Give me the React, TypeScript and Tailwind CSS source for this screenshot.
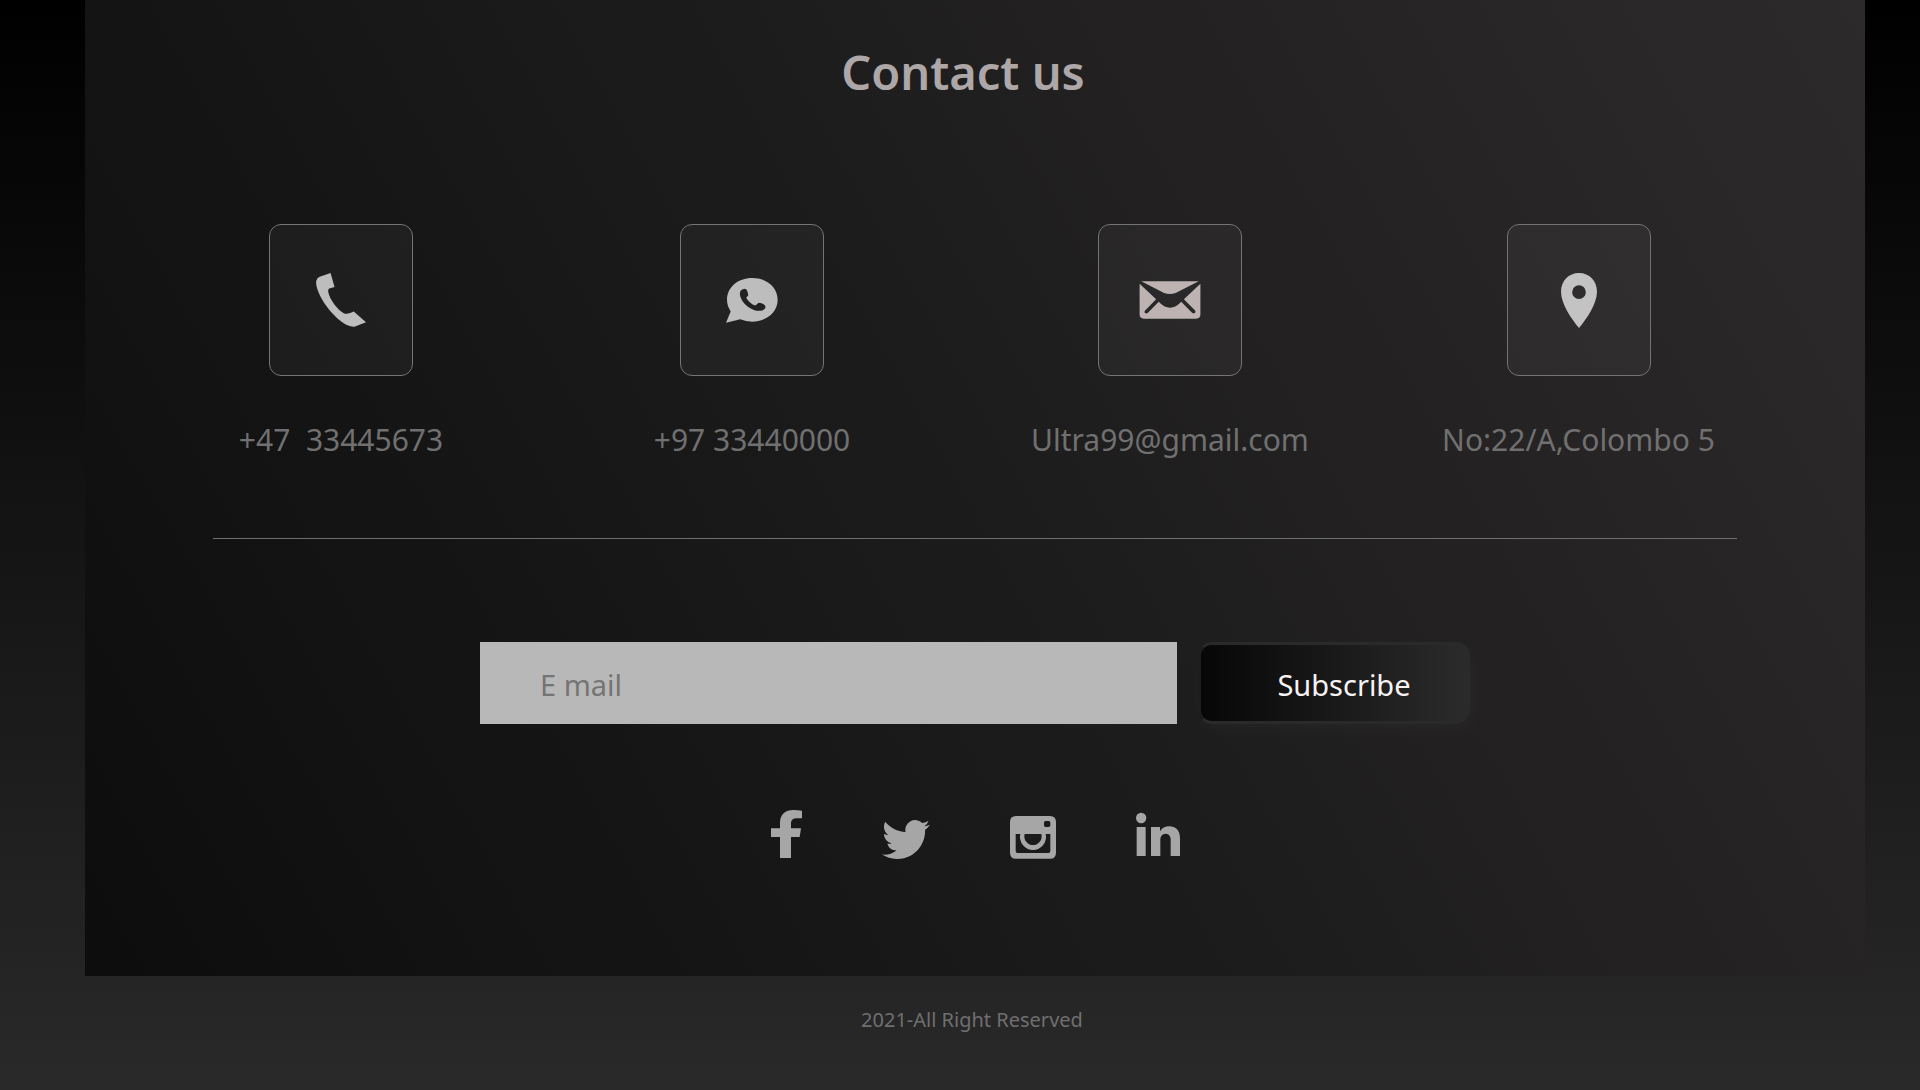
import type { ReactNode } from "react";

const PhoneIcon = () => (
  <svg viewBox="285 219 151 163" className="h-[54px] w-[50px]" fill="#bdbdbd" aria-hidden="true">
    <path d="M329 219L341 261L325 266Q321 268 322 276C326 298 350 330 370 341Q374 342 378 342Q388 341 399 335L436 368L401 381Q392 382 378 376C343 358 300 305 288 264Q284 250 286 242Q288 233 296 230Z" />
  </svg>
);

const WhatsappIcon = () => (
  <svg viewBox="264 231 157 136" className="h-[45px] w-[52px]" aria-hidden="true">
    <path
      fill="#bdbdbd"
      fillRule="evenodd"
      d="M343 231C386 231 420 259 420 297C420 335 386 363 343 363Q324 363 307 356L264 366L278 332Q267 315 267 297C267 259 300 231 343 231ZM318 264C309 264 305 272 306 281C308 300 328 322 352 329Q362 331 373 329C382 327 385 321 382 314Q375 307 363 306C359 307 358 312 352 314C343 313 329 299 325 291C327 286 332 285 331 281Q329 269 325 265Q322 263 318 264Z"
    />
  </svg>
);

const MailIcon = () => (
  <svg viewBox="330 242 186 115" className="h-[38px] w-[62px]" fill="#beb3b3" aria-hidden="true">
    <path d="M336 243H510L440 278Q423 285 405 278Z" />
    <path d="M331 250L381 297L347 332Q343 339 351 340Q354 340 357 337L389 305Q405 323 423 323Q441 323 457 305L489 337Q493 341 498 339Q502 336 499 331L465 297L515 250V343Q515 356 502 356H344Q331 356 331 343Z" />
  </svg>
);

const PinIcon = () => (
  <svg viewBox="414 225 108 165" className="h-[55px] w-9" fill="#c3c3c3" aria-hidden="true">
    <path
      fillRule="evenodd"
      d="M468 225C499 225 522 249 522 281C522 318 490 363 468 390C446 363 414 318 414 281C414 249 437 225 468 225ZM468 262A20.500 20.500 0 1 0 468 303A20.500 20.500 0 1 0 468 262Z"
    />
  </svg>
);

const FacebookIcon = () => (
  <svg viewBox="93 60 93 147" className="h-[49px] w-[31px]" fill="#a6a6a6" aria-hidden="true">
    <path d="M120 204V141H93V115H120V99C120 72 136 60 160 60Q175 60 186 62V85H170Q153 85 153 99V115H183L179 141H153V204Z" />
  </svg>
);

const TwitterIcon = () => (
  <svg viewBox="71 7.500 24 24.500" className="h-[49px] w-12" fill="#a6a6a6" aria-hidden="true">
    <path
      transform="translate(71 10.250)"
      d="M23.953 4.57a10 10 0 01-2.825.775 4.958 4.958 0 002.163-2.723c-.951.555-2.005.959-3.127 1.184a4.92 4.92 0 00-8.384 4.482C7.69 8.095 4.067 6.13 1.64 3.162a4.822 4.822 0 00-.666 2.475c0 1.71.87 3.213 2.188 4.096a4.904 4.904 0 01-2.228-.616v.06a4.923 4.923 0 003.946 4.827 4.996 4.996 0 01-2.212.085 4.936 4.936 0 004.604 3.417 9.867 9.867 0 01-6.102 2.105c-.39 0-.779-.023-1.17-.067a13.995 13.995 0 007.557 2.209c9.053 0 13.998-7.496 13.998-13.985 0-.21 0-.42-.015-.63A9.935 9.935 0 0024 4.59z"
    />
  </svg>
);

const InstagramIcon = () => (
  <svg viewBox="810 60 138 147" className="h-[49px] w-[46px]" fill="#a6a6a6" aria-hidden="true">
    <path
      fillRule="evenodd"
      d="M828 78H930Q948 78 948 96V188Q948 206 930 206H828Q810 206 810 188V96Q810 78 828 78ZM917 93Q912 93 912 98V106Q912 111 917 111H926Q931 111 931 106V98Q931 93 926 93ZM827 132V183Q827 189 833 189H925Q931 189 931 183V132H917A39 39 0 1 1 841 132ZM854 132H904A26 26 0 1 1 854 132Z"
    />
  </svg>
);

const LinkedinIcon = () => (
  <svg viewBox="1188 60 132 147" className="h-[49px] w-11" fill="#a6a6a6" aria-hidden="true">
    <circle cx="1203.500" cy="84" r="15.500" />
    <path d="M1190 111H1217V198H1190ZM1233 111H1260V124Q1269 109 1287 109C1311 109 1320 124 1320 146V198H1292V151Q1292 131 1277 131Q1261 131 1261 151V198H1233Z" />
  </svg>
);

const contacts: { label: string; href: string; icon: ReactNode }[] = [
  { label: "+47  33445673", href: "tel:+4733445673", icon: <PhoneIcon /> },
  { label: "+97 33440000", href: "tel:+9733440000", icon: <WhatsappIcon /> },
  { label: "Ultra99@gmail.com", href: "mailto:Ultra99@gmail.com", icon: <MailIcon /> },
  { label: "No:22/A,Colombo 5", href: "#location", icon: <PinIcon /> },
];

const socials: { name: string; icon: ReactNode }[] = [
  { name: "Facebook", icon: <FacebookIcon /> },
  { name: "Twitter", icon: <TwitterIcon /> },
  { name: "Instagram", icon: <InstagramIcon /> },
  { name: "LinkedIn", icon: <LinkedinIcon /> },
];

export default function App() {
  return (
    <div className="flex min-h-screen flex-col bg-[linear-gradient(180deg,#000000,#292929)] font-['Noto_Sans','Open_Sans',sans-serif]">
      <main className="mr-[55px] ml-[85px] bg-[linear-gradient(61deg,#0d0d0d,#1d1c1c_50%,#2d2a2b)] pb-[117px]">
        <h1 className="pt-10 pr-6 text-center text-[47px] leading-16 font-semibold text-[#aea7a7]">Contact us</h1>

        <ul className="mt-[120px] mr-[87px] ml-[54px] grid grid-cols-[404fr_418fr_418fr_399fr]">
          {contacts.map((contact) => (
            <li key={contact.label}>
              <a href={contact.href} className="flex flex-col items-center">
                <span className="flex h-[152px] w-36 items-center justify-center rounded-xl border border-[#747474] bg-white/4">
                  {contact.icon}
                </span>
                <span className="mt-11 text-[30px] leading-10 whitespace-pre text-[#707070]">{contact.label}</span>
              </a>
            </li>
          ))}
        </ul>

        <hr className="mx-32 mt-[78px] border-[#6f6f6f]" />

        <form className="mt-[103px] flex justify-center gap-[21px]" onSubmit={(e) => e.preventDefault()}>
          <input
            type="email"
            aria-label="E mail"
            placeholder="E mail"
            className="h-[82px] w-[697px] bg-[#b8b8b8] px-[60px] pt-0.5 text-[29px] text-[#333333] outline-none placeholder:text-[#747474]"
          />
          <button
            type="submit"
            className="h-[82px] w-[272px] rounded-[14px] border-3 border-[#2a2a2a] border-l-[#1f1e1e] bg-[linear-gradient(90deg,#070707,#2b2b2b)] pt-1 pl-5 text-[29px] text-[#f8f2f2] shadow-[4px_6px_20px_rgba(255,255,255,0.03)]"
          >
            Subscribe
          </button>
        </form>

        <nav aria-label="Social media" className="mt-[86px] flex justify-center gap-20">
          {socials.map((social) => (
            <a key={social.name} href={`#${social.name.toLowerCase()}`} aria-label={social.name}>
              {social.icon}
            </a>
          ))}
        </nav>
      </main>

      <footer className="pt-7 pl-6 text-center text-xl leading-8 text-[#6f6f6f]">2021-All Right Reserved</footer>
    </div>
  );
}
